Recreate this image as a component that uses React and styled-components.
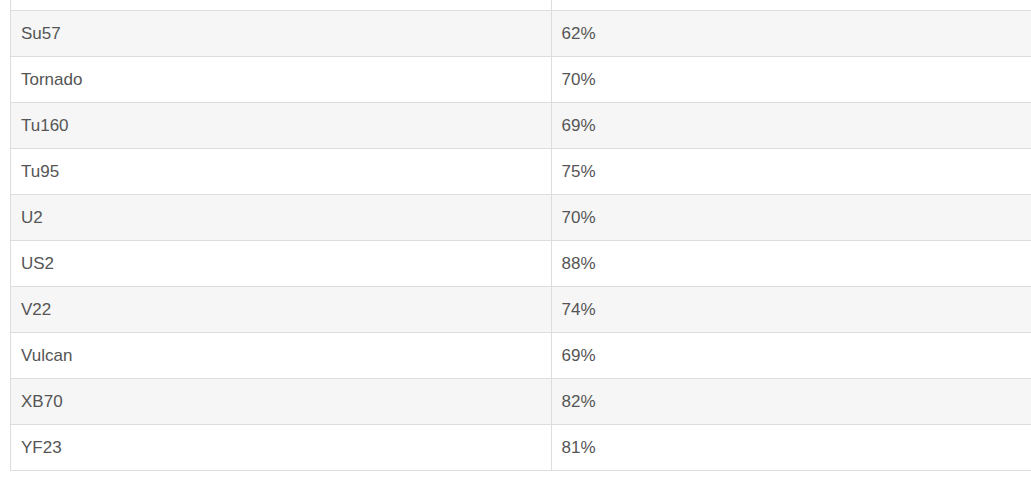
import React from 'react';
import styled, { createGlobalStyle } from 'styled-components';

const GlobalStyle = createGlobalStyle`
  html, body {
    margin: 0;
    padding: 0;
    background: #ffffff;
    overflow: hidden;
  }
  body {
    font-family: "Liberation Sans", Arial, sans-serif;
  }
`;

const Page = styled.div`
  padding-left: 10px;
  height: 483px;
  overflow: hidden;
`;

const Table = styled.table`
  width: 1082px;
  margin-top: -36px;
  border-collapse: collapse;
  border-spacing: 0;
  font-size: 17px;
  color: #555555;
`;

const Row = styled.tr`
  background: ${props => (props.striped ? '#f6f6f6' : '#ffffff')};
`;

const Cell = styled.td`
  width: 50%;
  height: 46px;
  box-sizing: border-box;
  padding: 0 10px;
  border: 1px solid #dddddd;
  vertical-align: middle;
  line-height: 20px;
`;

// first row is scrolled mostly out of view, only its lower edge shows
const rows = [
  ['', ''],
  ['Su57', '62%'],
  ['Tornado', '70%'],
  ['Tu160', '69%'],
  ['Tu95', '75%'],
  ['U2', '70%'],
  ['US2', '88%'],
  ['V22', '74%'],
  ['Vulcan', '69%'],
  ['XB70', '82%'],
  ['YF23', '81%'],
];

export default function App() {
  return (
    <>
      <GlobalStyle />
      <Page>
        <Table>
          <tbody>
            {rows.map(([name, value], i) => (
              <Row key={i} striped={i % 2 === 1}>
                <Cell>{name}</Cell>
                <Cell>{value}</Cell>
              </Row>
            ))}
          </tbody>
        </Table>
      </Page>
    </>
  );
}
